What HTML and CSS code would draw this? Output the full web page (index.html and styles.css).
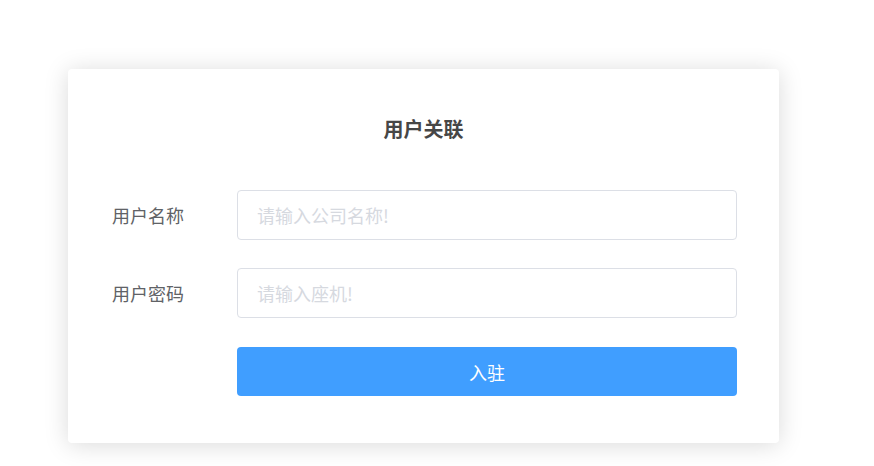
FILE: index.html
```html
<!DOCTYPE html>
<html lang="zh-CN">
<head>
<meta charset="utf-8">
<title>用户关联</title>
<link rel="stylesheet" href="styles.css">
</head>
<body>
<div class="card">
  <h2 class="title">用户关联</h2>
  <form class="form">
    <div class="row">
      <label class="label">用户名称</label>
      <input class="input" type="text" placeholder="请输入公司名称!">
    </div>
    <div class="row">
      <label class="label">用户密码</label>
      <input class="input" type="text" placeholder="请输入座机!">
    </div>
    <div class="row row-btn">
      <span class="label"></span>
      <button class="btn" type="button">入驻</button>
    </div>
  </form>
</div>
</body>
</html>
```
FILE: styles.css
```css
html, body {
  margin: 0;
  padding: 0;
  background: #ffffff;
}
body {
  padding: 69px 0 40px 68px;
  min-height: 466px;
  box-sizing: border-box;
  font-family: "Noto Sans CJK SC", "Noto Sans", sans-serif;
}
.card {
  box-sizing: border-box;
  width: 711px;
  height: 374px;
  background: #fff;
  border-radius: 4px;
  box-shadow: 0 2px 24px rgba(0, 0, 0, 0.15);
  padding: 50px 42px 0 44px;
}
.title {
  margin: 0 0 0 -2px;
  font-size: 20px;
  line-height: 20px;
  font-weight: 700;
  color: #464646;
  text-align: center;
}
.form {
  margin-top: 51px;
  display: flex;
  flex-direction: column;
  gap: 28px;
}
.row {
  display: flex;
  align-items: center;
}
.row-btn {
  margin-top: 1px;
}
.label {
  width: 125px;
  flex: none;
  font-size: 18px;
  color: #606266;
}
.input {
  flex: none;
  box-sizing: border-box;
  width: 500px;
  height: 50px;
  border: 1px solid #dcdfe6;
  border-radius: 4px;
  padding: 0 19px;
  font-size: 18px;
  font-family: inherit;
  color: #606266;
  outline: none;
}
.input::placeholder {
  color: #d6d9df;
}
.btn {
  flex: none;
  width: 500px;
  height: 49px;
  border: none;
  border-radius: 4px;
  background: #409eff;
  color: #fff;
  font-size: 18px;
  font-family: inherit;
  padding: 0;
}
```
